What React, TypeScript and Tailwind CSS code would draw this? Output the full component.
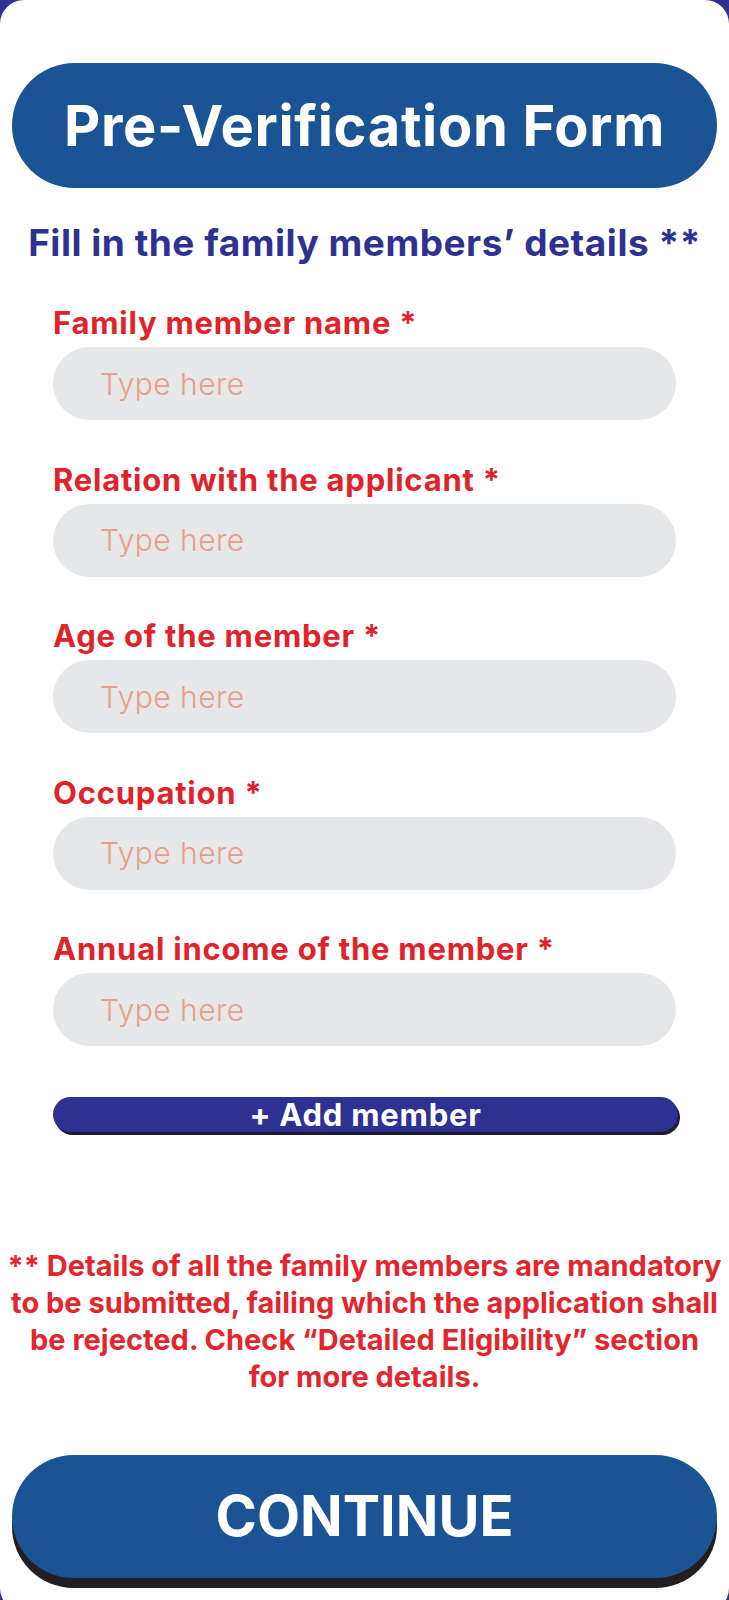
import { useState } from "react";

const fields = [
  "Family member name",
  "Relation with the applicant",
  "Age of the member",
  "Occupation",
  "Annual income of the member",
];

export default function App() {
  const [values, setValues] = useState<string[]>(fields.map(() => ""));

  return (
    <div className="h-[1600px] overflow-hidden bg-[#2e3192] [font-family:Inter,sans-serif]">
      <div className="h-[1612px] rounded-[24px] bg-white px-3 flex flex-col">
        <div className="mt-[63px] h-[125px] rounded-full bg-[#1b5494] flex items-center justify-center">
          <h1 className="text-[56px] font-bold text-white tracking-[0.012em] leading-none">Pre-Verification Form</h1>
        </div>

        <p className="mt-[32px] text-center text-[37px] leading-[46px] font-bold text-[#2e3192] tracking-[0.014em] whitespace-nowrap">
          Fill in the family members’ details **
        </p>

        <div className="ml-[41px] w-[623px] mt-[39px] flex flex-col gap-[41.5px]">
          {fields.map((f, i) => (
            <div key={f} className="flex flex-col gap-[6px]">
              <label className="text-[31px] leading-[36px] font-bold text-[#e0232b] tracking-[0.025em] whitespace-nowrap">
                {f} *
              </label>
              <input
                type="text"
                value={values[i]}
                onChange={(e) => setValues(values.map((v, j) => (j === i ? e.target.value : v)))}
                placeholder="Type here"
                className="h-[73px] w-full rounded-full bg-[#e6e7e8] pl-[47px] pr-6 text-[30px] font-light tracking-[0.015em] text-gray-800 placeholder:text-[#e7a08a] focus:outline-none"
              />
            </div>
          ))}

          <button className="mt-[9px] h-[35px] w-[625px] rounded-full bg-[#2e3192] shadow-[2px_3px_0_#1d1d2b] text-white text-[31px] font-bold tracking-[0.025em] leading-none flex items-center justify-center">
            + Add member
          </button>
        </div>

        <p className="-mx-3 mt-[115px] text-center text-[29px] leading-[37px] font-bold text-[#e3262e]">
          <span className="block whitespace-nowrap">** Details of all the family members are mandatory</span>
          <span className="block whitespace-nowrap">to be submitted, failing which the application shall</span>
          <span className="block whitespace-nowrap">be rejected. Check “Detailed Eligibility” section</span>
          <span className="block whitespace-nowrap">for more details.</span>
        </p>

        <button className="mt-[60px] h-[123px] w-full rounded-full bg-[#1b5494] shadow-[0_10px_0_#231f20] text-white text-[56px] font-bold leading-none">
          CONTINUE
        </button>
      </div>
    </div>
  );
}
